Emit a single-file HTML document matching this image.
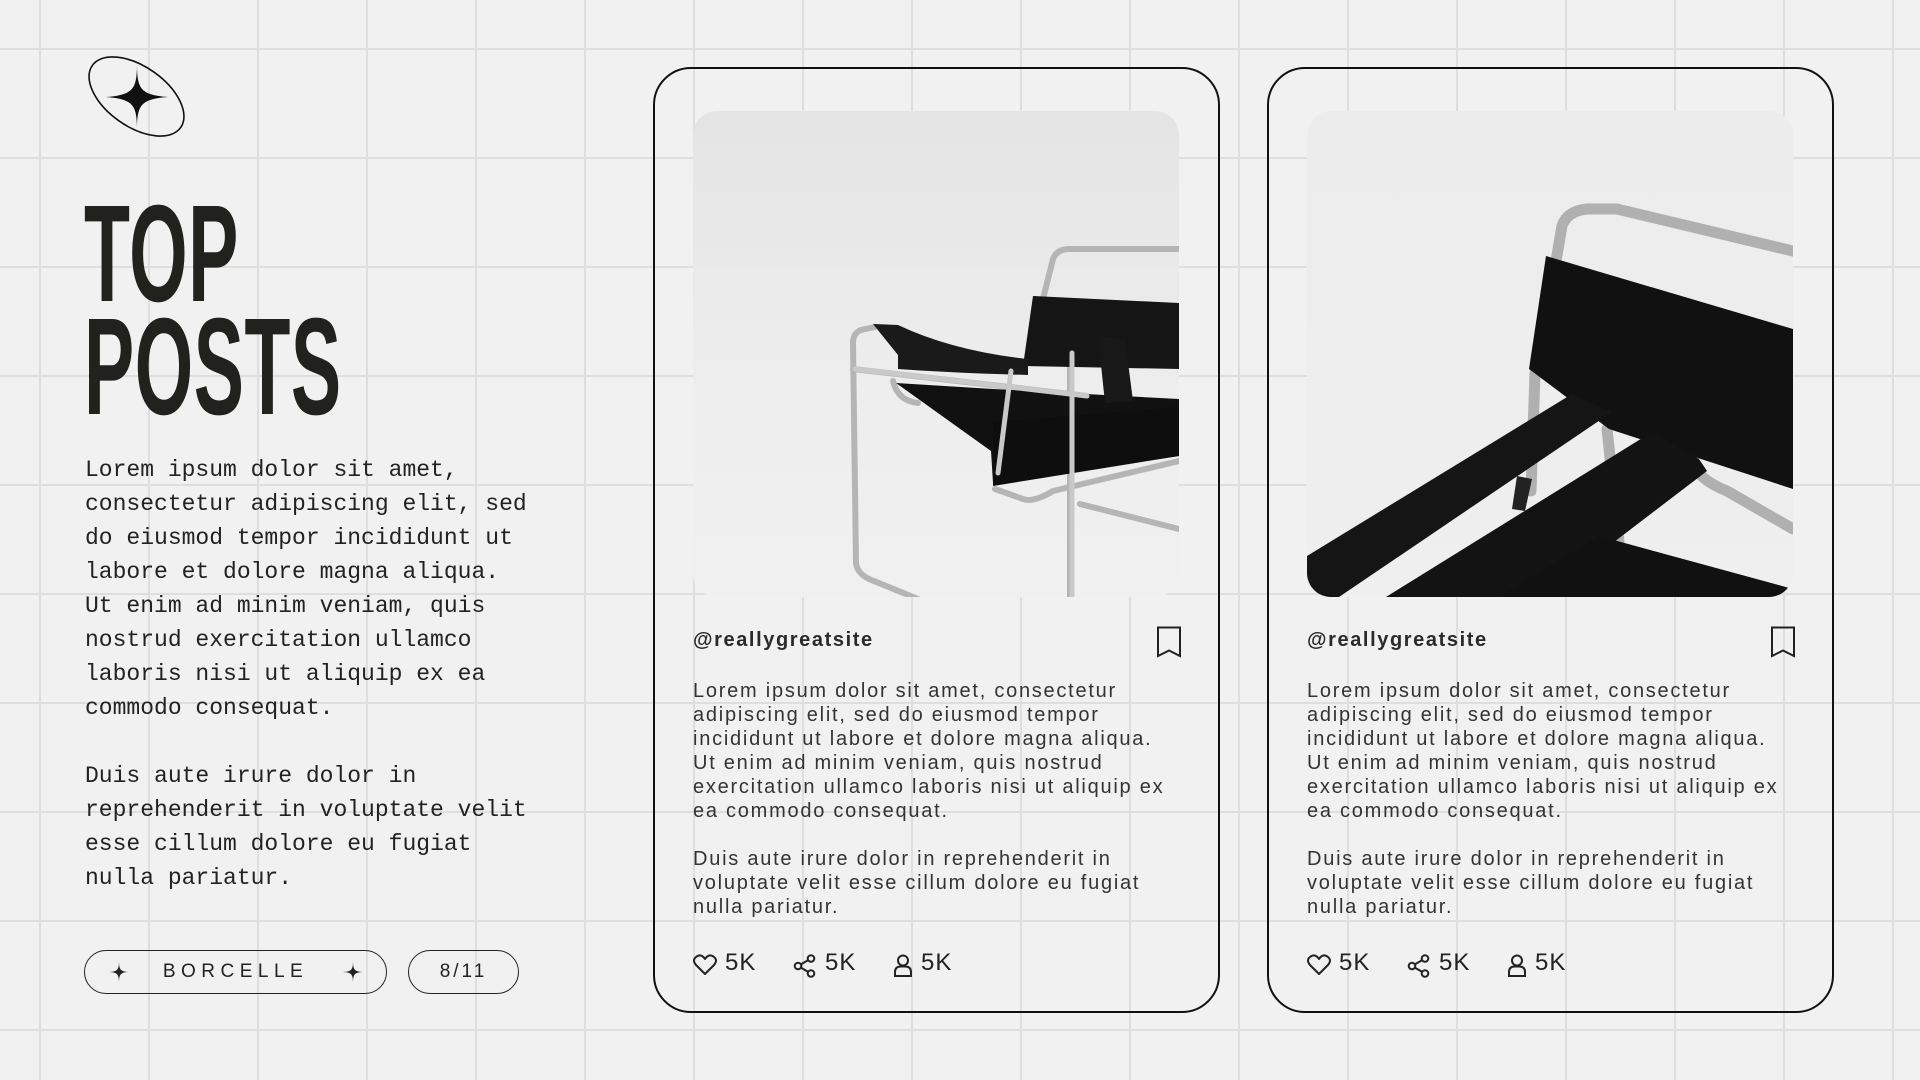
<!DOCTYPE html>
<html><head><meta charset="utf-8"><style>
*{margin:0;padding:0;box-sizing:border-box}
body{width:1920px;height:1080px;overflow:hidden;background:#f1f1f1;position:relative;font-family:"Liberation Sans",sans-serif;color:#222;
background-image:linear-gradient(to right,#dedede 2px,transparent 2px),linear-gradient(to bottom,#dedede 2px,transparent 2px);
background-size:109px 109px;background-position:39px 48px}
.abs{position:absolute}
.title{position:absolute;left:84px;top:198px;font-weight:bold;font-size:138px;line-height:113px;color:#21211e;transform:scaleX(0.545);transform-origin:0 0;white-space:nowrap;letter-spacing:1px}
.mono{position:absolute;left:85px;top:453px;font-family:"Liberation Mono",monospace;font-size:23px;line-height:34px;color:#222;white-space:pre}
.pill{position:absolute;top:950px;height:44px;border:1.5px solid #222;border-radius:22px;font-size:19px;letter-spacing:5.5px;display:flex;align-items:center;justify-content:center}
.card{position:absolute;top:67px;width:567px;height:946px;border:2.5px solid #111;border-radius:38px}
.img{position:absolute;left:38px;top:42px;width:486px;height:486px;border-radius:24px;overflow:hidden;background:linear-gradient(180deg,#e4e4e4,#eeeeee 60%,#f0f0f0)}
.handle{position:absolute;left:38px;top:560px;font-size:20px;letter-spacing:1.6px;font-weight:bold;color:#2a2a2a}
.body{position:absolute;left:38px;top:610px;font-size:20px;letter-spacing:1.75px;line-height:24px;color:#333;white-space:nowrap}
.stats{position:absolute;left:38px;top:880px;font-size:24px;color:#222;letter-spacing:1px}
.bm{position:absolute;left:501px;top:557px}
</style></head><body>

<svg class="abs" style="left:0;top:0" width="300" height="200">
<ellipse cx="136.5" cy="96.5" rx="54" ry="30" transform="rotate(35 136.5 96.5)" fill="none" stroke="#111" stroke-width="1.6"/>
<path d="M137,66 C137.5,88 140,95 168,97 C140,99 137.5,106 137,128 C136.5,106 134,99 106,97 C134,95 136.5,88 137,66Z" fill="#111"/>
</svg>

<div class="title">TOP<br>POSTS</div>

<div class="mono">Lorem ipsum dolor sit amet,
consectetur adipiscing elit, sed
do eiusmod tempor incididunt ut
labore et dolore magna aliqua.
Ut enim ad minim veniam, quis
nostrud exercitation ullamco
laboris nisi ut aliquip ex ea
commodo consequat.

Duis aute irure dolor in
reprehenderit in voluptate velit
esse cillum dolore eu fugiat
nulla pariatur.</div>

<div class="pill" style="left:84px;width:303px">BORCELLE</div>
<svg class="abs" style="left:108px;top:961px" width="22" height="22"><path d="M11,1 C11.3,8 12,10.7 21,11 C12,11.3 11.3,14 11,21 C10.7,14 10,11.3 1,11 C10,10.7 10.7,8 11,1Z" fill="#222"/></svg>
<svg class="abs" style="left:342px;top:961px" width="22" height="22"><path d="M11,1 C11.3,8 12,10.7 21,11 C12,11.3 11.3,14 11,21 C10.7,14 10,11.3 1,11 C10,10.7 10.7,8 11,1Z" fill="#222"/></svg>
<div class="pill" style="left:408px;width:111px;letter-spacing:3px">8/11</div>

<!-- Card 1 -->
<div class="card" style="left:653px">
 <div class="img">
  <svg width="486" height="486" viewBox="0 0 486 486">
   <g fill="none" stroke="#b5b5b5" stroke-width="6" stroke-linecap="round">
    <path d="M182,216 L168,219 Q160,222 160,232 L163,452 Q164,462 176,468 L225,488"/>
    <path d="M350,188 L360,148 Q364,138 376,138 L486,138"/>
    <path d="M160,258 L394,285"/>
    <path d="M377,486 L377,240 Q378,228 390,226 L420,225 Q432,228 432,242 L432,255"/>
    <path d="M387,393 L486,418"/>
    <path d="M302,378 L330,388 Q340,392 360,380 L486,350"/>
    <path d="M200,270 Q205,290 225,292"/>
   </g>
   <path d="M340,185 L486,192 L486,258 L330,255Z" fill="#151515"/>
   <path d="M180,213 L205,214 Q260,240 335,248 L335,264 Q260,262 205,258 L205,244Z" fill="#1a1a1a"/>
   <path d="M203,272 L300,278 L486,288 L486,345 L300,372 L298,340Z" fill="#111"/>
   <path d="M300,311 L486,296 L486,345 L300,375Z" fill="#0e0e0e"/>
   <path d="M405,225 L432,228 L440,290 L412,292Z" fill="#181818"/>
   <g fill="none" stroke="#c9c9c9" stroke-width="5" stroke-linecap="round">
    <path d="M162,258 L394,285"/>
    <path d="M318,260 L305,362"/>
    <path d="M379,488 L379,242"/>
   </g>
  </svg>
 </div>
 <div class="handle">@reallygreatsite</div>
 <svg class="bm" width="26" height="32"><path d="M2,1.5 H24 V30 L13,24.5 L2,30 Z" fill="none" stroke="#222" stroke-width="2"/></svg>
 <div class="body">Lorem ipsum dolor sit amet, consectetur<br>adipiscing elit, sed do eiusmod tempor<br>incididunt ut labore et dolore magna aliqua.<br>Ut enim ad minim veniam, quis nostrud<br>exercitation ullamco laboris nisi ut aliquip ex<br>ea commodo consequat.<br><br>Duis aute irure dolor in reprehenderit in<br>voluptate velit esse cillum dolore eu fugiat<br>nulla pariatur.</div>
 <div class="stats">
  <svg class="abs" style="left:0;top:5px" width="24" height="22"><path d="M12,20 L3,11 Q-1,6 3,3 Q8,-1 12,5 Q16,-1 21,3 Q25,6 21,11 Z" fill="none" stroke="#222" stroke-width="2" stroke-linejoin="round"/></svg>
  <span class="abs" style="left:32px;top:0">5K</span>
  <svg class="abs" style="left:100px;top:5px" width="24" height="24"><circle cx="18" cy="4.5" r="3.3" fill="none" stroke="#222" stroke-width="2"/><circle cx="5" cy="12" r="3.3" fill="none" stroke="#222" stroke-width="2"/><circle cx="18" cy="19.5" r="3.3" fill="none" stroke="#222" stroke-width="2"/><path d="M8,10.3 L15,6.2 M8,13.7 L15,17.8" stroke="#222" stroke-width="2"/></svg>
  <span class="abs" style="left:132px;top:0">5K</span>
  <svg class="abs" style="left:200px;top:5px" width="20" height="24"><circle cx="10" cy="6.5" r="5" fill="none" stroke="#222" stroke-width="2"/><path d="M2,22 V18 Q2,12.5 8,12.5 H12 Q18,12.5 18,18 V22 Z" fill="none" stroke="#222" stroke-width="2"/></svg>
  <span class="abs" style="left:228px;top:0">5K</span>
 </div>
</div>

<!-- Card 2 -->
<div class="card" style="left:1267px">
 <div class="img" style="background:linear-gradient(180deg,#ececec,#efefef)">
  <svg width="486" height="486" viewBox="0 0 486 486">
   <g fill="none" stroke="#b0b0b0" stroke-width="11" stroke-linecap="round">
    <path d="M249,150 L255,115 Q260,100 280,98 L310,98 L486,140"/>
    <path d="M228,262 L224,380"/>
    <path d="M300,318 L312,431"/>
    <path d="M392,362 Q400,372 420,380 L486,418"/>
   </g>
   <path d="M239,145 L486,218 L486,378 L302,318 L222,258Z" fill="#111"/>
   <path d="M0,445 L265,283 L305,301 L32,486 L0,486Z" fill="#151515"/>
   <path d="M79,486 L345,321 L392,348 L400,360 L235,486Z" fill="#131313"/>
   <path d="M292,425 L486,478 L486,486 L192,486Z" fill="#111"/>
   <path d="M210,365 L225,368 L218,400 L205,398Z" fill="#222"/>
  </svg>
 </div>
 <div class="handle">@reallygreatsite</div>
 <svg class="bm" width="26" height="32"><path d="M2,1.5 H24 V30 L13,24.5 L2,30 Z" fill="none" stroke="#222" stroke-width="2"/></svg>
 <div class="body">Lorem ipsum dolor sit amet, consectetur<br>adipiscing elit, sed do eiusmod tempor<br>incididunt ut labore et dolore magna aliqua.<br>Ut enim ad minim veniam, quis nostrud<br>exercitation ullamco laboris nisi ut aliquip ex<br>ea commodo consequat.<br><br>Duis aute irure dolor in reprehenderit in<br>voluptate velit esse cillum dolore eu fugiat<br>nulla pariatur.</div>
 <div class="stats">
  <svg class="abs" style="left:0;top:5px" width="24" height="22"><path d="M12,20 L3,11 Q-1,6 3,3 Q8,-1 12,5 Q16,-1 21,3 Q25,6 21,11 Z" fill="none" stroke="#222" stroke-width="2" stroke-linejoin="round"/></svg>
  <span class="abs" style="left:32px;top:0">5K</span>
  <svg class="abs" style="left:100px;top:5px" width="24" height="24"><circle cx="18" cy="4.5" r="3.3" fill="none" stroke="#222" stroke-width="2"/><circle cx="5" cy="12" r="3.3" fill="none" stroke="#222" stroke-width="2"/><circle cx="18" cy="19.5" r="3.3" fill="none" stroke="#222" stroke-width="2"/><path d="M8,10.3 L15,6.2 M8,13.7 L15,17.8" stroke="#222" stroke-width="2"/></svg>
  <span class="abs" style="left:132px;top:0">5K</span>
  <svg class="abs" style="left:200px;top:5px" width="20" height="24"><circle cx="10" cy="6.5" r="5" fill="none" stroke="#222" stroke-width="2"/><path d="M2,22 V18 Q2,12.5 8,12.5 H12 Q18,12.5 18,18 V22 Z" fill="none" stroke="#222" stroke-width="2"/></svg>
  <span class="abs" style="left:228px;top:0">5K</span>
 </div>
</div>

</body></html>
